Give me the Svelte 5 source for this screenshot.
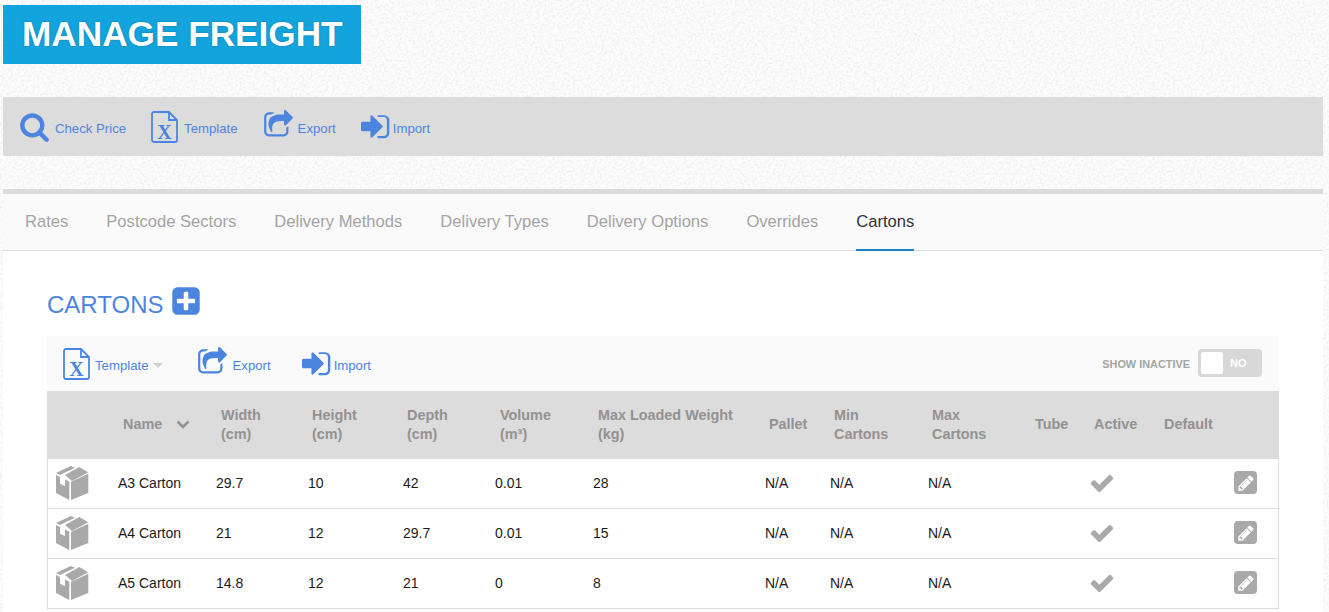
<script>
  const tabs = ['Rates', 'Postcode Sectors', 'Delivery Methods', 'Delivery Types', 'Delivery Options', 'Overrides', 'Cartons'];

  const cartons = [
    { name: 'A3 Carton', width: '29.7', height: '10', depth: '42', volume: '0.01', weight: '28' },
    { name: 'A4 Carton', width: '21', height: '12', depth: '29.7', volume: '0.01', weight: '15' },
    { name: 'A5 Carton', width: '14.8', height: '12', depth: '21', volume: '0', weight: '8' }
  ];

  const colWidths = [66, 98, 91, 95, 93, 98, 172, 65, 98, 102, 59, 70, 70, 55];

  const icons = {
    search: 'M1216 832q0-185-131.5-316.5t-316.5-131.5-316.5 131.5-131.5 316.5 131.5 316.5 316.5 131.5 316.5-131.5 131.5-316.5zm512 832q0 52-38 90t-90 38q-54 0-90-38l-343-342q-179 124-399 124-143 0-273.5-55.5t-225-150-150-225-55.5-273.5 55.5-273.5 150-225 225-150 273.5-55.5 273.5 55.5 225 150 150 225 55.5 273.5q0 220-124 399l343 343q37 37 37 90z',
    share: 'M1472 989v259q0 119-84.5 203.5t-203.5 84.5h-832q-119 0-203.5-84.5t-84.5-203.5v-832q0-119 84.5-203.5t203.5-84.5h255q13 0 22.5 9.5t9.5 22.5q0 27-26 32-77 26-133 60-10 4-16 4h-112q-66 0-113 47t-47 113v832q0 66 47 113t113 47h832q66 0 113-47t47-113v-214q0-19 18-29 28-13 54-37 16-16 35-8 21 9 21 29zm237-496l-384 384q-18 19-45 19-12 0-25-5-39-17-39-59v-192h-160q-323 0-438 131-119 137-74 473 3 23-20 34-8 2-12 2-16 0-26-13-10-14-21-31t-39.5-68.5-49.5-99.5-38.5-114-17.5-122q0-49 3.5-91t14-90 28-88 47-81.5 68.5-74 94.5-61.5 124.5-48.5 159.5-30.5 196.5-11h160v-192q0-42 39-59 13-5 25-5 26 0 45 19l384 384q19 19 19 45t-19 45z',
    signIn: 'M1184 896q0 26-19 45l-544 544q-19 19-45 19t-45-19-19-45v-288h-448q-26 0-45-19t-19-45v-384q0-26 19-45t45-19h448v-288q0-26 19-45t45-19 45 19l544 544q19 19 19 45zm352-352v704q0 119-84.5 203.5t-203.5 84.5h-320q-13 0-22.5-9.5t-9.5-22.5q0-4-1-20t-.5-26.5 3-23.5 10-19.5 20.5-6.5h320q66 0 113-47t47-113v-704q0-66-47-113t-113-47h-312q-10 0-17-2t-11-8.5-3-8.5-2-14 1-14 0-17q0-13 9.5-22.5t22.5-9.5h320q119 0 203.5 84.5t84.5 203.5z',
    plus: 'M1408 960v-128q0-26-19-45t-45-19h-320v-320q0-26-19-45t-45-19h-128q-26 0-45 19t-19 45v320h-320q-26 0-45 19t-19 45v128q0 26 19 45t45 19h320v320q0 26 19 45t45 19h128q26 0 45-19t19-45v-320h320q26 0 45-19t19-45zm256-544v960q0 119-84.5 203.5t-203.5 84.5h-960q-119 0-203.5-84.5t-84.5-203.5v-960q0-119 84.5-203.5t203.5-84.5h960q119 0 203.5 84.5t84.5 203.5z',
    check: 'M1671 566q0 40-28 68l-724 724-136 136q-28 28-68 28t-68-28l-136-136-362-362q-28-28-28-68t28-68l136-136q28-28 68-28t68 28l294 295 656-657q28-28 68-28t68 28l136 136q28 28 28 68z',
    pencil: 'M491 1536l91-91-235-235-91 91v107h128v128h107zm523-928q0-22-22-22-10 0-17 7l-542 542q-7 7-7 17 0 22 22 22 10 0 17-7l542-542q7-7 7-17zm-54-192l416 416-832 832h-416v-416zm683 96q0 53-37 90l-166 166-416-416 166-165q36-38 90-38 53 0 91 38l235 234q37 39 37 91z'
  };
</script>

{#snippet fa(path, cls)}
  <svg class={cls} viewBox="0 0 1792 1792" aria-hidden="true"><path d={path} /></svg>
{/snippet}

{#snippet fileIcon()}
  <svg class="file-icon" viewBox="0 0 27 32" aria-hidden="true">
    <path class="file-line" d="M1 3a2 2 0 0 1 2-2h15l8 8v20a2 2 0 0 1-2 2H3a2 2 0 0 1-2-2z" />
    <path class="file-line" d="M18 1v8h8" />
    <text x="13.5" y="27.500" text-anchor="middle">X</text>
  </svg>
{/snippet}

{#snippet boxIcon()}
  <svg class="box-icon" viewBox="0 0 33 34" aria-hidden="true">
    <path d="M0 7L14.700 0 19 1.700 4 9z" />
    <path d="M9 9L23.300 1l9 5.300L16 15z" />
    <path d="M0 9l4 2v6.700l5 2.300v-6.700l4.300 2.400V34L0 27z" />
    <path d="M15 15.700l17.300-8V27L15 34z" />
  </svg>
{/snippet}

<div class="page">
  <h1 class="title">MANAGE FREIGHT</h1>

  <div class="toolbar">
    <a class="tool">{@render fa(icons.search, 'ico search')}<span>Check Price</span></a>
    <a class="tool">{@render fileIcon()}<span>Template</span></a>
    <a class="tool">{@render fa(icons.share, 'ico share')}<span>Export</span></a>
    <a class="tool">{@render fa(icons.signIn, 'ico signin')}<span>Import</span></a>
  </div>

  <div class="panel">
    <ul class="tabs">
      {#each tabs as tab}
        <li class:active={tab === 'Cartons'}>{tab}</li>
      {/each}
    </ul>

    <div class="panel-body">
      <h2 class="section-title">CARTONS {@render fa(icons.plus, 'ico plus')}</h2>

      <div class="sub-toolbar">
        <a class="tool template">{@render fileIcon()}<span>Template</span><i class="caret"></i></a>
        <a class="tool export">{@render fa(icons.share, 'ico share')}<span>Export</span></a>
        <a class="tool import">{@render fa(icons.signIn, 'ico signin')}<span>Import</span></a>
        <div class="inactive">
          <span class="inactive-label">SHOW INACTIVE</span>
          <div class="switch"><span class="knob"></span><span class="switch-text">NO</span></div>
        </div>
      </div>

      <table>
        <colgroup>
          {#each colWidths as w}
            <col style="width: {w}px" />
          {/each}
        </colgroup>
        <thead>
          <tr>
            <th></th>
            <th class="single">
              <span class="sort">Name
                <svg viewBox="0 0 14 9" aria-hidden="true"><path d="M1.500 1.500L7 7l5.500-5.500" /></svg>
              </span>
            </th>
            <th>Width<br />(cm)</th>
            <th>Height<br />(cm)</th>
            <th>Depth<br />(cm)</th>
            <th>Volume<br />(m³)</th>
            <th>Max Loaded Weight<br />(kg)</th>
            <th class="single">Pallet</th>
            <th>Min<br />Cartons</th>
            <th>Max<br />Cartons</th>
            <th class="single">Tube</th>
            <th class="single">Active</th>
            <th class="single">Default</th>
            <th></th>
          </tr>
        </thead>
        <tbody>
          {#each cartons as c}
            <tr>
              <td class="box-cell">{@render boxIcon()}</td>
              <td>{c.name}</td>
              <td>{c.width}</td>
              <td class="nudge">{c.height}</td>
              <td class="nudge">{c.depth}</td>
              <td>{c.volume}</td>
              <td>{c.weight}</td>
              <td>N/A</td>
              <td>N/A</td>
              <td>N/A</td>
              <td></td>
              <td>{@render fa(icons.check, 'ico check')}</td>
              <td></td>
              <td>
                <span class="edit">{@render fa(icons.pencil, 'ico pencil')}</span>
              </td>
            </tr>
          {/each}
        </tbody>
      </table>
    </div>
  </div>
</div>

<style>
  :global(html) {
    overflow: hidden;
  }
  :global(body) {
    font-family: "Liberation Sans", Arial, sans-serif;
    background-color: #fdfdfd;
    background-image:
      url("data:image/svg+xml,%3Csvg xmlns='http://www.w3.org/2000/svg' width='300' height='300'%3E%3Cfilter id='n' x='0' y='0' width='100%25' height='100%25'%3E%3CfeTurbulence type='fractalNoise' baseFrequency='0.45' numOctaves='2' stitchTiles='stitch'/%3E%3CfeColorMatrix values='0 0 0 0 0.89 0 0 0 0 0.89 0 0 0 0 0.89 3 0 0 0 -1.2'/%3E%3C/filter%3E%3Crect width='300' height='300' filter='url(%23n)'/%3E%3C/svg%3E");
  }
  .page {
    padding: 5px 6px 0 3px;
  }
  .title {
    display: inline-block;
    margin: 0;
    background: #13a4dd;
    color: #fff;
    font-size: 35.2px;
    font-weight: 700;
    line-height: 58px;
    height: 59px;
    padding: 0 18px 0 19px;
    vertical-align: top;
    text-shadow: 0 0 2px rgba(0, 0, 0, 0.3);
  }
  .toolbar {
    display: flex;
    align-items: center;
    gap: 25px;
    height: 59px;
    margin-top: 33px;
    padding-left: 16px;
    background: #dcdcdc;
  }
  .tool {
    display: flex;
    align-items: center;
    color: #4c85df;
    font-size: 13.2px;
  }
  .tool span {
    margin-left: 5px;
    padding-top: 4px;
  }
  .ico {
    display: block;
    fill: #4c85df;
  }
  .ico.search {
    width: 31px;
    height: 31px;
  }
  .ico.share {
    width: 31px;
    height: 31px;
    margin: -3px -1px 0 0;
  }
  .ico.signin {
    width: 33px;
    height: 33px;
    margin-right: -6px;
  }
  .file-icon {
    display: block;
    width: 27px;
    height: 32px;
    margin-right: 1px;
  }
  .file-line {
    fill: none;
    stroke: #4c85df;
    stroke-width: 1.8;
  }
  .file-icon text {
    fill: #4c85df;
    font-family: "Liberation Serif", serif;
    font-size: 20px;
    font-weight: 700;
  }
  .panel {
    margin-top: 33px;
    border-top: 5px solid #dcdcdc;
    background: #fff;
    min-height: 430px;
  }
  .tabs {
    display: flex;
    gap: 38px;
    margin: 0;
    padding: 0 0 0 22px;
    height: 57px;
    list-style: none;
    background: #fafafa;
    border-bottom: 1px solid #ddd;
    box-sizing: border-box;
  }
  .tabs li {
    color: #a5a3a3;
    font-size: 16.58px;
    line-height: 55px;
    height: 57px;
    box-sizing: border-box;
  }
  .tabs li.active {
    color: #333;
    border-bottom: 2px solid #1b82c5;
  }
  .panel-body {
    padding: 0 44px;
  }
  .section-title {
    display: flex;
    align-items: center;
    gap: 7px;
    margin: 0;
    padding: 29px 0 6px;
    height: 50px;
    color: #4c85df;
    font-size: 24px;
    font-weight: 400;
    line-height: 36px;
  }
  .ico.plus {
    width: 32px;
    height: 32px;
    margin-top: -9px;
  }
  .sub-toolbar {
    display: flex;
    align-items: center;
    gap: 30px;
    height: 55px;
    padding: 0 17px 0 16px;
    background: #fafafa;
  }
  .tool.template {
    margin-right: 4px;
  }
  .tool.template span {
    margin-left: 4px;
  }
  .tool.export span {
    margin-left: 6px;
  }
  .tool.import {
    margin-left: 1px;
  }
  .caret {
    width: 0;
    height: 0;
    margin: 3px 0 0 4px;
    border-left: 5px solid transparent;
    border-right: 5px solid transparent;
    border-top: 5px solid #d0d0d0;
  }
  .inactive {
    display: flex;
    align-items: center;
    gap: 8px;
    margin-left: auto;
    padding-bottom: 2px;
  }
  .inactive-label {
    padding-top: 2px;
    color: #a5a3a3;
    font-size: 10.9px;
    font-weight: 700;
  }
  .switch {
    display: flex;
    align-items: center;
    width: 64px;
    height: 28px;
    padding: 3px;
    box-sizing: border-box;
    border-radius: 4px;
    background: #d8d8d8;
  }
  .knob {
    width: 22px;
    height: 22px;
    border-radius: 2px;
    background: #fff;
  }
  .switch-text {
    margin-left: 7px;
    color: #fff;
    font-size: 11px;
    font-weight: 700;
  }
  table {
    width: 1232px;
    table-layout: fixed;
    border-collapse: separate;
    border-spacing: 0;
    font-size: 14px;
  }
  th {
    height: 68px;
    box-sizing: border-box;
    padding: 0 0 0 10px;
    background: #dcdcdc;
    color: #949191;
    font-size: 14.4px;
    font-weight: 700;
    text-align: left;
    line-height: 19px;
    white-space: nowrap;
  }
  th.single {
    padding-bottom: 2px;
  }
  th:nth-child(n+8):nth-child(-n+10) {
    padding-left: 9px;
  }
  .sort {
    display: inline-flex;
    align-items: center;
    gap: 14px;
  }
  .sort svg {
    width: 14px;
    height: 9px;
    fill: none;
    stroke: #949191;
    stroke-width: 2.500;
  }
  td {
    height: 50px;
    box-sizing: border-box;
    padding: 0 0 2px 5px;
    border-bottom: 1px solid #ddd;
    color: #1a1a1a;
    vertical-align: middle;
  }
  td.nudge {
    padding-left: 6px;
  }
  tbody tr td:first-child {
    border-left: 1px solid #ddd;
  }
  tbody tr td:last-child {
    border-right: 1px solid #ddd;
    padding-left: 10px;
  }
  td.box-cell {
    padding-left: 8px;
  }
  .box-icon {
    display: block;
    width: 33px;
    height: 34px;
    fill: #a9a9a9;
  }
  .ico.check {
    width: 26px;
    height: 26px;
    fill: #a9a9a9;
  }
  .edit {
    display: flex;
    align-items: center;
    justify-content: center;
    width: 23px;
    height: 23px;
    border-radius: 4px;
    background: #a9a9a9;
  }
  .ico.pencil {
    width: 18px;
    height: 18px;
    fill: #fff;
  }
</style>
